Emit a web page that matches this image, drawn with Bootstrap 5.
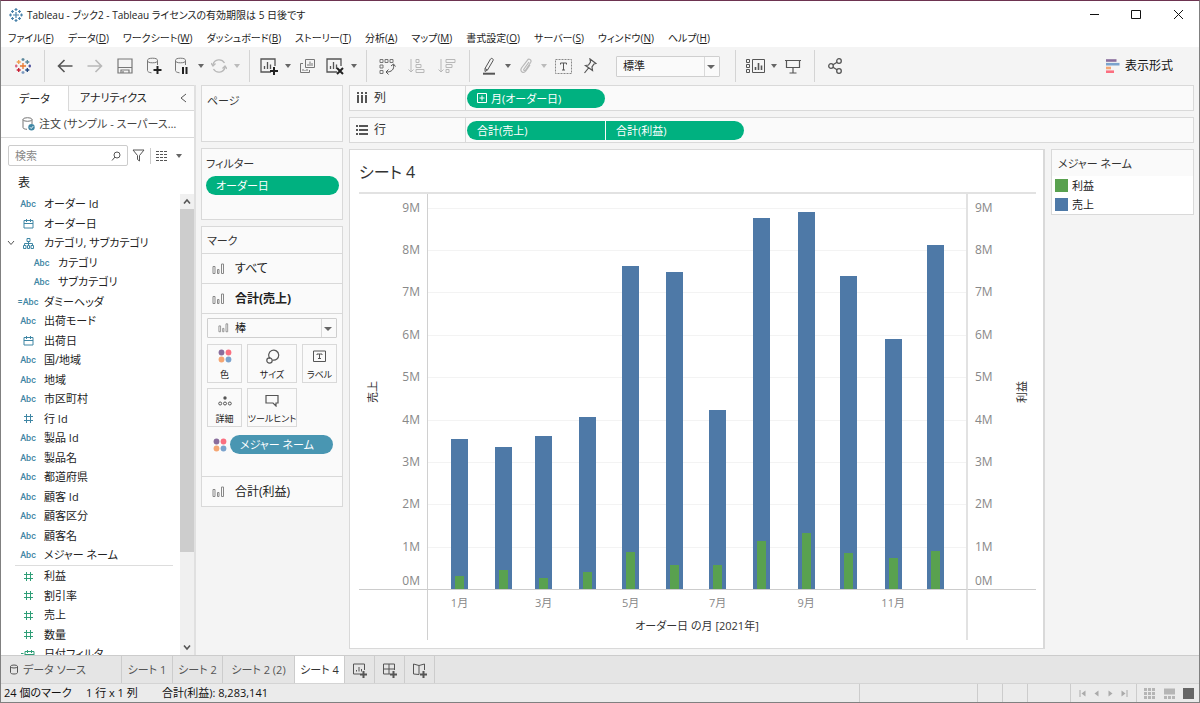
<!DOCTYPE html>
<html lang="ja">
<head>
<meta charset="utf-8">
<meta name="viewport" content="width=device-width, initial-scale=1">
<title>Tableau - ブック2</title>
<link rel="stylesheet" href="https://cdn.jsdelivr.net/npm/bootstrap@5.3.0/dist/css/bootstrap.min.css">
<style>
  :root { --line:#d9d9d9; --ink:#222; --dim:#333; --teal:#3f86a4; --grn:#2f9e77; --pill:#00b180; }
  body { font-family:"Open Sans","Noto Sans CJK JP",sans-serif; font-size:11px; line-height:16px; color:var(--ink);
    font-feature-settings:"palt"; background:#f4f4f4; }
  button, input, select { font:inherit; color:inherit; font-feature-settings:inherit; }
  button { border:0; background:none; padding:0; }
  svg { display:block; fill:none; stroke:#555; flex:none; }
  svg.pale { stroke:#b8b8b8; }
  svg.soft { stroke:#777; }
  svg.on-pill { stroke:#fff; }
  .app-window { height:100vh; border:1px solid #808080; border-top-color:#6d3350; overflow:hidden; }
  .title-bar { height:27px; background:#fff; padding-left:8px; font-size:10px; }
  .title-bar svg { stroke:#111; }
  .title-bar .app-mark { stroke:#4a83ab; }
  .title-bar button { width:42px; height:27px; }
  .menu-bar { height:19px; background:#fff; font-size:10px; }
  .menu-list { width:702px; margin-left:7px; }
  .menu-list a { color:var(--ink); text-decoration:none; line-height:20px; white-space:nowrap; }
  .tool-bar { height:38px; }
  .tool-bar button { display:flex; align-items:center; justify-content:center; height:30px; flex:none; }
  .b43 { width:43px } .b30 { width:30px } .b28 { width:28px } .b26 { width:26px }
  .tri { width:10px; }
  .tri::before, .drop::after { content:""; border:3px solid transparent; border-top:4px solid #666; border-bottom:0; }
  .tri.off::before { border-top-color:#bbb; }
  .vsep { width:1px; height:32px; background:#d4d4d4; margin:0 5px 0 7px; flex:none; }
  .vsep-short { width:1px; height:16px; background:#ccc; margin:0 5px; }
  .pick { position:relative; }
  .pick select { appearance:none; width:100%; height:21px; border:1px solid #cfcfcf; border-radius:1px; background:#fafafa; padding:0 6px; outline:0; line-height:16px; }
  .pick::after { content:""; position:absolute; right:0; top:1px; bottom:1px; width:16px; border-left:1px solid var(--line); pointer-events:none; }
  .pick::before { content:""; position:absolute; right:5px; top:9px; border:4px solid transparent; border-top:4px solid #666; border-bottom:0; z-index:1; pointer-events:none; }
  .pick svg { position:absolute; left:11px; top:5px; }
  .pick-tool { width:104px; margin:0 8px 0 13px; }
  .show-me { font-size:12px; gap:5px; margin-right:26px; color:#111; }
  .data-pane { width:195px; background:#fff; border-right:2px solid #e0e0e0; }
  .pane-tabs { height:26px; }
  .pane-tabs .on { width:67px; border-top:1px solid var(--line); }
  .pane-tabs .rest { background:#fafafa; border:1px solid var(--line); border-right:0; padding:0 6px 0 11px; }
  .source-row { height:27px; border-bottom:1px solid var(--line); padding-left:21px; color:#444; }
  .search-row { height:28px; padding:7px 8px 0 7px; }
  .search-box { width:120px; height:21px; border:1px solid #ccc; border-radius:2px; padding:0 6px; }
  .search-box input { border:0; outline:0; width:88px; padding:0; background:none; }
  .search-box input::placeholder { color:#888; opacity:1; }
  .list-head { height:28px; padding:9px 0 0 17px; font-size:12px; }
  .fields li { display:flex; align-items:center; height:20px; white-space:nowrap; }
  .fields li:nth-child(even) { height:19px; }
  .fields .kind { width:43px; padding-left:11px; display:flex; justify-content:center; align-items:center; color:var(--teal); font:500 9px/16px Roboto,sans-serif; }
  .fields .sub .kind { padding-left:0; margin-left:24px; width:33px; justify-content:center; }
  .fields svg { stroke:var(--teal); }
  .fields .twist { stroke:#555; }
  .measures { border-top:1px solid #ddd; width:158px; margin-left:14px; }
  .measures li { margin-left:-14px; }
  .fields.measures svg { stroke:var(--grn); }
  .scroller { width:14px; background:#f0f0f0; }
  .scroller i { background:#cdcdcd; flex:none; height:343px; }
  .shelf-col { width:142px; gap:6px; margin-left:5px; }
  .pane { background:#fafafa; border:1px solid var(--line); }
  .pane h2 { font-size:11px; line-height:16px; font-weight:400; color:var(--dim); margin:0; }
  .pages-card { height:57px; padding:7px 5px; }
  .filter-card { height:72px; padding:7px 3px 7px 4px; }
  .pill { background:var(--pill); color:#fff; border-radius:10px; height:19px; line-height:19px; padding-left:10px; white-space:nowrap; text-align:left; display:flex; align-items:center; }
  .pill-dim { background:#4996b2; }
  .marks-card h2 { padding:6px 5px 4px; }
  .mark-row { height:30px; border-top:1px solid var(--line); padding-left:10px; gap:10px; font-size:12px; display:flex; align-items:center; width:100%; }
  .mark-body { height:163px; border-top:1px solid var(--line); padding:4px 5px 0; }
  .mark-body .pick select { height:20px; padding-left:27px; }
  .mark-grid { display:grid; grid-template-columns:35px 50px 35px; justify-content:space-between; row-gap:5px; margin-top:6px; }
  .mark-grid button { height:39px; border:1px solid var(--line); display:flex; flex-direction:column; align-items:center; justify-content:space-between; padding-top:4px; font-size:9px; white-space:nowrap; }
  .mark-grid button span { line-height:14px; }
  .mark-pill { margin:8px 4px 0 6px; gap:3px; }
  .workspace { margin:0 5px 6px 6px; gap:6px; min-width:0; }
  .shelf { height:26px; font-size:12px; color:var(--dim); }
  .shelf .head { width:116px; border-right:1px solid var(--line); padding-left:6px; gap:6px; }
  .shelf .pill { width:138px; font-size:11px; margin-left:1px; }
  .canvas { gap:6px; min-height:0; }
  .sheet { background:#fff; border:1px solid var(--line); border-right-width:2px; padding:0 7px 8px 9px; min-width:0; }
  .sheet h1 { font-size:16px; line-height:44px; height:42px; margin:0; font-weight:400; color:#333; }
  .chart { display:grid; grid-template-columns:68px 1fr 68px; grid-template-rows:1fr 51px; border-top:2px solid #e2e2e2; color:#888; }
  .chart > * { min-width:0; min-height:0; }
  .scale { display:flex; flex-direction:column; justify-content:flex-end; height:100%; }
  .scale > * { height:calc(100% / 9.32); display:flex; flex-direction:column; justify-content:space-between; }
  .scale span { display:block; margin-top:-8px; line-height:16px; font-size:12px; }
  .scale span + span { margin:0; }
  .scale-left { text-align:right; padding-right:7px; }
  .scale-right { padding-left:7px; }
  .grid-lines > * { border-top:1px solid #f3f3f3; }
  .axis-name { writing-mode:vertical-rl; text-orientation:sideways; transform:rotate(180deg); color:#333; width:28px; line-height:28px; text-align:center; }
  .plot { display:grid; border-left:1px solid #d0d0d0; border-right:2px solid #e2e2e2; }
  .plot > * { grid-area:1 / 1; }
  .months { display:flex; padding-left:23px; min-width:0; }
  .months > * { flex:var(--d) 1 0; min-width:0; }
  .col-slot { display:flex; align-items:flex-end; }
  .bar-sales { width:17px; height:calc(var(--v) * 100% / 9.32); background:#4e79a7; flex:none; }
  .bar-profit { width:9px; height:calc(var(--v) * 100% / 9.32); background:#59a14f; margin-left:-13px; flex:none; }
  .foot { border-top:1px solid #ccc; }
  .foot-mid { border-left:1px solid #d0d0d0; border-right:2px solid #e2e2e2; }
  .tick { width:17px; display:flex; justify-content:center; white-space:nowrap; padding-top:5px; }
  .foot-title { color:#333; text-align:center; padding-top:7px; }
  .legend-box { width:143px; }
  .legend-box h2 { background:#fafafa; padding:6px 6px 4px; }
  .legend-box .entry { height:19px; gap:4px; padding-left:3px; }
  .swatch { width:13px; height:13px; }
  .c-profit { background:#59a14f; } .c-sales { background:#4e79a7; }
  .sheet-tabs { height:28px; background:#e5e5e5; border-top:1px solid #ccc; color:#555; }
  .sheet-tabs button { border-right:1px solid #ccc; display:flex; align-items:center; justify-content:center; }
  .sheet-tabs .source { width:121px; justify-content:flex-start; padding-left:8px; gap:4px; }
  .w50 { width:50px } .w51 { width:51px } .w72 { width:72px }
  .sheet-tabs .on { background:#fff; color:#333; }
  .status-bar { height:19px; background:#ebebeb; border-top:1px solid #d4d4d4; color:#111; padding-left:3px; }
  .status-bar .cell { border-left:1px solid #ccc; }
  .w118 { width:118px } .w25 { width:25px } .w43 { width:43px } .w66 { width:66px; padding:0 4px } .w62 { width:63px; padding:0 5px 0 7px }
  .w82 { width:82px } .w76 { width:76px }
</style>
</head>
<body>
<svg width="0" height="0" class="position-absolute">
  <defs>
    <symbol id="hash" viewBox="0 0 11 11"><path d="M3.5 1v9M7.5 1v9M1 3.5h9M1 7.5h9"/></symbol>
    <symbol id="cal" viewBox="0 0 11 11"><path d="M1 2.5h9v7.5H1zM1 5.5h9M3.5 1v3M7.5 1v3"/></symbol>
    <symbol id="tree" viewBox="0 0 11 11"><path d="M4 .5h3v3H4zM.5 7.500h2.500v3H.5zM4.500 7.500h2v3h-2zM8 7.500h2.500v3H8zM5.500 3.500v4M1.500 7.500v-2h8v2"/></symbol>
    <symbol id="bars" viewBox="0 0 13 12"><path d="M1 3.500h2v7H1zM5.500 6.500h1.500v4H5.500zM9.500 1h2v9.500h-2z" stroke="#888"/></symbol>
    <symbol id="dots" viewBox="0 0 14 14"><g stroke="none"><circle cx="3.500" cy="3.500" r="2.900" fill="#8a6d9c"/><circle cx="10.500" cy="3.500" r="2.900" fill="#fb6f80"/><circle cx="3.500" cy="10.500" r="2.900" fill="#f5a673"/><circle cx="10.500" cy="10.500" r="2.900" fill="#7ba3cd"/></g></symbol>
    <symbol id="chart" viewBox="0 0 20 20"><path d="M12 16H2V3h14v7M5.500 13v-3M8.500 13V6M11.500 13V8.500" stroke-width="1.300"/></symbol>
  </defs>
</svg>

<div class="app-window d-flex flex-column">
  <header>
    <div class="title-bar d-flex align-items-center">
      <svg class="app-mark" width="14" height="14" viewBox="0 0 14 14" stroke-width="1.200"><path d="M7 4v6M4 7h6M7 0v3M5.500 1.500h3M7 11v3M5.500 12.500h3M1.500 5.500v3M0 7h3M12.500 5.500v3M11 7h3M3.500 2v3M2 3.500h3M10.500 2v3M9 3.500h3M3.500 9v3M2 10.500h3M10.500 9v3M9 10.500h3"/></svg>
      <span class="ms-1">Tableau - ブック2 - Tableau ライセンスの有効期限は 5 日後です</span>
      <div class="ms-auto d-flex">
        <button aria-label="最小化"><svg class="mx-auto" width="11" height="11"><path d="M1 5.500h9"/></svg></button>
        <button aria-label="最大化"><svg class="mx-auto" width="11" height="11"><path d="M.5 1.500h9v8h-9z"/></svg></button>
        <button aria-label="閉じる"><svg class="mx-auto" width="11" height="11"><path d="M1 1l9 9M10 1l-9 9"/></svg></button>
      </div>
    </div>
    <nav class="menu-bar"><div class="menu-list d-flex justify-content-between">
      <a href="#">ファイル(<u>F</u>)</a><a href="#">データ(<u>D</u>)</a><a href="#">ワークシート(<u>W</u>)</a><a href="#">ダッシュボード(<u>B</u>)</a><a href="#">ストーリー(<u>T</u>)</a><a href="#">分析(<u>A</u>)</a><a href="#">マップ(<u>M</u>)</a><a href="#">書式設定(<u>O</u>)</a><a href="#">サーバー(<u>S</u>)</a><a href="#">ウィンドウ(<u>N</u>)</a><a href="#">ヘルプ(<u>H</u>)</a>
    </div></nav>
    <div class="tool-bar d-flex align-items-center">
      <button class="b43" aria-label="スタート ページ"><svg width="16" height="16" viewBox="0 0 16 16" stroke-width="1.300"><path d="M8 5v6M5 8h6" stroke="#e8762c"/><path d="M8 0v3M6.500 1.500h3" stroke="#5b879b"/><path d="M8 13v3M6.500 14.500h3" stroke="#7a99c0"/><path d="M3.700 2v4M1.700 4h4" stroke="#f0a050"/><path d="M12.300 2v4M10.300 4h4" stroke="#59879b"/><path d="M3.700 10v4M1.700 12h4" stroke="#c72035"/><path d="M12.300 10v4M10.300 12h4" stroke="#1f457e"/><path d="M1.200 6.500v3M0 8h2.500" stroke="#d9607b"/><path d="M14.800 6.500v3M13.500 8H16" stroke="#4c4f9c"/></svg></button>
      <span class="vsep ms-0"></span>
      <button class="b30" aria-label="元に戻す"><svg width="16" height="14" viewBox="0 0 16 14" stroke-width="1.600"><path d="M15.500 7H1.500M7.500 1l-6 6 6 6"/></svg></button>
      <button class="b30" aria-label="やり直し"><svg class="pale" width="16" height="14" viewBox="0 0 16 14" stroke-width="1.600"><path d="M.5 7h14M8.500 1l6 6-6 6"/></svg></button>
      <button class="b30" aria-label="保存"><svg class="soft" width="16" height="16" viewBox="0 0 16 16" stroke-width="1.200"><path d="M1 1h14v14H1zM1.500 9.500h13M4 15v-3h8v3M6 13v2"/></svg></button>
      <button class="b28" aria-label="データ ソースの追加"><svg class="soft" width="18" height="18" viewBox="0 0 18 18"><ellipse cx="7.500" cy="3.500" rx="5" ry="2.300"/><path d="M2.500 3.500v10c0 1.200 1.500 2 4 2.300M12.500 3.500V8" /><path d="M12.500 9v8M8.500 13h8" stroke="#222" stroke-width="2"/></svg></button>
      <button class="b28" aria-label="自動更新の一時停止"><svg class="soft" width="18" height="18" viewBox="0 0 18 18"><ellipse cx="7.500" cy="3.500" rx="5" ry="2.300"/><path d="M2.500 3.500v10c0 1.200 1.500 2 4 2.300M12.500 3.500V8"/><path d="M10 10v7M13.500 10v7" stroke="#222" stroke-width="2"/></svg></button>
      <button class="tri" aria-label="更新メニュー"></button>
      <button class="b26" aria-label="更新"><svg class="pale" width="16" height="16" viewBox="0 0 16 16" stroke-width="1.300"><path d="M2 6.500A6.300 6.300 0 0 1 13.500 5M14 9.500A6.300 6.300 0 0 1 2.500 11M0 5l2 3 2.500-2.500M16 11l-2-3-2.500 2.500"/></svg></button>
      <button class="tri off" aria-label="更新オプション"></button>
      <span class="vsep"></span>
      <button class="b28" aria-label="新しいワークシート"><svg width="20" height="20" viewBox="0 0 20 20"><use href="#chart"/><path d="M15 11v8M11 15h8" stroke="#222" stroke-width="2"/></svg></button>
      <button class="tri" aria-label="新規メニュー"></button>
      <button class="b28" aria-label="複製"><svg class="soft" width="17" height="16" viewBox="0 0 17 16"><path d="M6.500 1.500h9v8h-9zM4 5.500H1.500v9h9v-2.500M9 8V6M11 8V3.500M13 8V5M4 13v-2M6 13v-1M8 13v-2"/></svg></button>
      <button class="b28" aria-label="シートのクリア"><svg width="20" height="20" viewBox="0 0 20 20"><use href="#chart"/><path d="M12 12l6 6M18 12l-6 6" stroke="#222" stroke-width="2"/></svg></button>
      <button class="tri" aria-label="クリア メニュー"></button>
      <span class="vsep"></span>
      <button class="b30" aria-label="行と列の交換"><svg width="17" height="17" viewBox="0 0 17 17"><path d="M1 1.500h3v3H1zM6 1.500h3v3H6zM11 1.500h3v3h-3zM1 7h3v3H1zM1 12.500h3v3H1z" stroke="#777"/><path d="M14.500 6.500c1 5-2 7.500-7 7.500M12 8l2.500-2 2 2.500M9.500 11.500L7 14l2.500 2.500"/></svg></button>
      <button class="b30" aria-label="昇順"><svg class="pale" width="18" height="16" viewBox="0 0 18 16"><path d="M3 1v13M.5 11.500L3 14l2.500-2.500M8 1.500h3v3H8zM8 6.500h5v3H8zM8 11.500h8v3H8z"/></svg></button>
      <button class="b30" aria-label="降順"><svg class="pale" width="18" height="16" viewBox="0 0 18 16"><path d="M3 1v13M.5 11.500L3 14l2.500-2.500M8 1.500h9v3H8zM8 6.500h6v3H8zM8 11.500h3v3H8z"/></svg></button>
      <span class="vsep"></span>
      <button class="b28" aria-label="ハイライト"><svg width="14" height="18" viewBox="0 0 14 18"><path d="M3 11.500L8.500 2c1-1.500 3.500 0 2.500 1.700L5.500 13 3 14.500zM3 11.500L5.500 13"/><path d="M1 16.700h12" stroke-width="2"/></svg></button>
      <button class="tri" aria-label="ハイライト メニュー"></button>
      <button class="b26" aria-label="グループ"><svg class="pale" width="14" height="16" viewBox="0 0 14 16" stroke-width="1.200"><path d="M10 4l-5 7c-.8 1.200.7 2.300 1.600 1l5-7.500c1.500-2.500-1.700-4.500-3.300-2.200L2.500 10c-2 3.500 2 6 4.300 3L11 7"/></svg></button>
      <button class="tri off" aria-label="グループ メニュー"></button>
      <button class="b28" aria-label="マーク ラベル"><svg width="17" height="15" viewBox="0 0 17 15"><path d="M.5.500h16v14H.5z" stroke-dasharray="2 1" stroke="#888"/><path d="M5.500 5.500V4h6v1.500M8.500 4v7M7 11h3"/></svg></button>
      <button class="b26" aria-label="軸の固定"><svg width="14" height="16" viewBox="0 0 14 16" stroke-width="1.200"><path d="M7 1l6 4.500-2 .5-2 3 .5 3.500L2.500 7.500 5.500 7l2-3zM5.500 10L1.500 15"/></svg></button>
      <div class="pick pick-tool"><select aria-label="表示サイズ"><option>標準</option></select></div>
      <span class="vsep"></span>
      <button class="b28" aria-label="カードの表示"><svg width="19" height="14" viewBox="0 0 19 14"><path d="M.5.500h3v3h-3zM.5 5.500h3v3h-3zM.5 10.500h3v3h-3zM6.500.500h12v13h-12z"/><path d="M9.500 11V8M12.500 11V4M15.500 11V6.500" stroke-width="1.600"/></svg></button>
      <button class="tri" aria-label="カード メニュー"></button>
      <button class="b28" aria-label="プレゼンテーション"><svg width="16" height="15" viewBox="0 0 16 15" stroke-width="1.200"><path d="M0 1.500h16M1.500 1.500v7h13v-7M8 8.500v5M4.500 14h7"/></svg></button>
      <span class="vsep"></span>
      <button class="b30" aria-label="共有"><svg width="15" height="16" viewBox="0 0 15 16" stroke-width="1.300"><circle cx="3" cy="8" r="2.300"/><circle cx="11" cy="3" r="2.300"/><circle cx="11" cy="13" r="2.300"/><path d="M5 6.800l4-2.500M5 9.200l4 2.500"/></svg></button>
      <button class="show-me ms-auto"><svg width="14" height="14" viewBox="0 0 14 14" stroke-width="2.600"><path d="M0 1.500h10.500" stroke="#8a6d9c"/><path d="M0 5.200h13.500" stroke="#7ba3cd"/><path d="M0 9h5" stroke="#f5a673"/><path d="M0 12.700h8" stroke="#fb6f80"/></svg>表示形式</button>
    </div>
  </header>

  <main class="d-flex flex-fill overflow-hidden">
    <aside class="data-pane d-flex flex-column flex-shrink-0">
      <div class="pane-tabs d-flex flex-shrink-0">
        <button class="on">データ</button>
        <div class="rest flex-fill d-flex align-items-center justify-content-between">
          <button>アナリティクス</button>
          <button aria-label="折りたたむ"><svg width="9" height="10"><path d="M7 1L2 5l5 4"/></svg></button>
        </div>
      </div>
      <div class="source-row d-flex align-items-center flex-shrink-0">
        <svg class="soft" width="13" height="14" viewBox="0 0 13 14"><path d="M1 2.500v8c0 1 1.500 1.700 4 1.800M10 2.500V7"/><ellipse cx="5.500" cy="2.500" rx="4.500" ry="1.800"/><circle cx="9.500" cy="10.300" r="3.200" fill="#3f86a4" stroke="none"/><path d="M8 10.300l1.200 1.200 2-2.300" stroke="#fff"/></svg>
        <a href="#" class="ms-1 text-reset text-decoration-none text-nowrap">注文 (サンプル - スーパース…</a>
      </div>
      <div class="search-row d-flex align-items-center flex-shrink-0">
        <label class="search-box d-flex align-items-center justify-content-between"><input type="text" placeholder="検索" aria-label="検索"><svg width="10" height="10" viewBox="0 0 10 10"><circle cx="6" cy="4" r="3"/><path d="M4 6L1 9.500"/></svg></label>
        <button class="ms-1" aria-label="フィルター"><svg width="13" height="13"><path d="M1 1h11L7.500 6.500V12l-2-1.500v-4z"/></svg></button>
        <span class="vsep-short"></span>
        <button class="drop d-flex align-items-center gap-2" aria-label="表示の切り替え"><svg width="12" height="10"><path d="M0 .5h12M0 3.500h12M0 6.500h12M0 9.500h12" stroke-dasharray="3 1"/></svg></button>
      </div>
      <div class="list-head flex-shrink-0">表</div>
      <div class="d-flex flex-fill overflow-hidden">
        <div class="flex-fill overflow-hidden">
          <ul class="fields list-unstyled m-0">
            <li><span class="kind">Abc</span>オーダー Id</li>
            <li><span class="kind"><svg width="11" height="11"><use href="#cal"/></svg></span>オーダー日</li>
            <li><span class="kind"><svg class="twist me-2" width="8" height="6" viewBox="0 0 8 6"><path d="M1 1l3 3.500L7 1"/></svg><svg width="11" height="11" class="me-3"><use href="#tree"/></svg></span>カテゴリ, サブカテゴリ</li>
            <li class="sub"><span class="kind">Abc</span>カテゴリ</li>
            <li class="sub"><span class="kind">Abc</span>サブカテゴリ</li>
            <li><span class="kind">=Abc</span>ダミーヘッダ</li>
            <li><span class="kind">Abc</span>出荷モード</li>
            <li><span class="kind"><svg width="11" height="11"><use href="#cal"/></svg></span>出荷日</li>
            <li><span class="kind">Abc</span>国/地域</li>
            <li><span class="kind">Abc</span>地域</li>
            <li><span class="kind">Abc</span>市区町村</li>
            <li><span class="kind"><svg width="11" height="11"><use href="#hash"/></svg></span>行 Id</li>
            <li><span class="kind">Abc</span>製品 Id</li>
            <li><span class="kind">Abc</span>製品名</li>
            <li><span class="kind">Abc</span>都道府県</li>
            <li><span class="kind">Abc</span>顧客 Id</li>
            <li><span class="kind">Abc</span>顧客区分</li>
            <li><span class="kind">Abc</span>顧客名</li>
            <li><span class="kind">Abc</span>メジャー ネーム</li>
          </ul>
          <ul class="fields measures list-unstyled mb-0">
            <li><span class="kind"><svg width="11" height="11"><use href="#hash"/></svg></span>利益</li>
            <li><span class="kind"><svg width="11" height="11"><use href="#hash"/></svg></span>割引率</li>
            <li><span class="kind"><svg width="11" height="11"><use href="#hash"/></svg></span>売上</li>
            <li><span class="kind"><svg width="11" height="11"><use href="#hash"/></svg></span>数量</li>
            <li><span class="kind"><svg width="14" height="11" viewBox="0 0 14 11"><path d="M0 4.500h2.500M0 7h2.500M4 2.500h9v7.500H4zM4 5.500h9M6.500 1v3M10.500 1v3"/></svg></span>日付フィルタ</li>
          </ul>
        </div>
        <div class="scroller d-flex flex-column flex-shrink-0">
          <svg width="14" height="15"><path d="M4 9.500L7 6l3 3.500" stroke-width="1.600"/></svg><i></i>
          <svg class="mt-auto" width="14" height="15"><path d="M4 5.500L7 9l3-3.500" stroke-width="1.600"/></svg>
        </div>
      </div>
    </aside>

    <section class="shelf-col d-flex flex-column flex-shrink-0">
      <div class="pane pages-card"><h2>ページ</h2></div>
      <div class="pane filter-card"><h2>フィルター</h2><button class="pill w-100 mt-1">オーダー日</button></div>
      <div class="pane marks-card">
        <h2>マーク</h2>
        <button class="mark-row"><svg width="13" height="12"><use href="#bars"/></svg>すべて</button>
        <button class="mark-row fw-bold"><svg width="13" height="12"><use href="#bars"/></svg>合計(売上)</button>
        <div class="mark-body">
          <div class="pick"><select aria-label="マーク タイプ"><option>棒</option></select><svg width="11" height="10"><use href="#bars"/></svg></div>
          <div class="mark-grid">
            <button><svg width="14" height="14"><use href="#dots"/></svg><span>色</span></button>
            <button><svg width="15" height="15" viewBox="0 0 15 15" stroke-width="1.200"><path d="M5 9.500A5 5 0 1 1 7.500 11"/><circle cx="4.500" cy="11.500" r="2.700"/></svg><span>サイズ</span></button>
            <button><svg width="13" height="14" viewBox="0 0 13 14"><path d="M.5 2h12v10.500H.5zM4 6V5h5v1M6.500 5v4.500M5 9.500h3"/></svg><span>ラベル</span></button>
            <button><svg width="14" height="14" viewBox="0 0 14 14"><circle cx="7" cy="5" r="1.700" fill="#555" stroke="none"/><circle cx="2.200" cy="10.500" r="1.500"/><circle cx="7" cy="10.500" r="1.500"/><circle cx="11.800" cy="10.500" r="1.500"/></svg><span>詳細</span></button>
            <button><svg width="14" height="14" viewBox="0 0 14 14" stroke-width="1.200"><path d="M1 2.500h12v7.500h-2v3l-3-3H1z"/></svg><span>ツールヒント</span></button>
          </div>
          <div class="mark-pill d-flex align-items-center"><svg width="14" height="14"><use href="#dots"/></svg><button class="pill pill-dim flex-fill">メジャー ネーム</button></div>
        </div>
        <button class="mark-row"><svg width="13" height="12"><use href="#bars"/></svg>合計(利益)</button>
      </div>
    </section>

    <section class="workspace flex-fill d-flex flex-column">
      <div class="pane shelf d-flex align-items-center flex-shrink-0">
        <div class="head d-flex align-items-center h-100"><svg width="12" height="12" stroke-width="2"><path d="M2 0v2M2 3v8M6 0v2M6 3v8M10 0v2M10 3v8"/></svg>列</div>
        <button class="pill"><svg class="me-1 on-pill" width="10" height="10"><path d="M.5.5h9v9h-9zM5 2.500v5M2.500 5h5"/></svg>月(オーダー日)</button>
      </div>
      <div class="pane shelf d-flex align-items-center flex-shrink-0">
        <div class="head d-flex align-items-center h-100"><svg width="12" height="12" stroke-width="2"><path d="M0 2h2M3 2h9M0 6h2M3 6h9M0 10h2M3 10h9"/></svg>行</div>
        <button class="pill rounded-end-0">合計(売上)</button><button class="pill rounded-start-0">合計(利益)</button>
      </div>
      <div class="canvas d-flex flex-fill">
        <article class="sheet flex-fill d-flex flex-column">
          <h1>シート 4</h1>
          <div class="chart flex-fill">
            <div class="d-flex align-items-center"><span class="axis-name">売上</span>
              <div class="scale scale-left flex-fill"><div><span>9M</span></div><div><span>8M</span></div><div><span>7M</span></div><div><span>6M</span></div><div><span>5M</span></div><div><span>4M</span></div><div><span>3M</span></div><div><span>2M</span></div><div><span>1M</span><span>0M</span></div></div></div>
            <div class="plot">
              <div class="scale grid-lines"><i></i><i></i><i></i><i></i><i></i><i></i><i></i><i></i><i></i></div>
              <div class="months" id="bars-row"></div>
            </div>
            <div class="d-flex align-items-center">
              <div class="scale scale-right flex-fill"><div><span>9M</span></div><div><span>8M</span></div><div><span>7M</span></div><div><span>6M</span></div><div><span>5M</span></div><div><span>4M</span></div><div><span>3M</span></div><div><span>2M</span></div><div><span>1M</span><span>0M</span></div></div><span class="axis-name">利益</span></div>
            <div class="foot"></div>
            <div class="foot foot-mid"><div class="months" id="ticks-row"></div><div class="foot-title">オーダー日 の月 [2021年]</div></div>
            <div class="foot"></div>
          </div>
        </article>
        <aside class="legend-box flex-shrink-0"><div class="pane bg-white">
          <h2>メジャー ネーム</h2>
          <div class="entry d-flex align-items-center"><span class="swatch c-profit"></span>利益</div>
          <div class="entry d-flex align-items-center"><span class="swatch c-sales"></span>売上</div>
        </div></aside>
      </div>
    </section>
  </main>

  <footer class="flex-shrink-0">
    <div class="sheet-tabs d-flex">
      <button class="source"><svg width="10" height="11" viewBox="0 0 10 11"><ellipse cx="5" cy="2.500" rx="3.500" ry="1.500"/><path d="M1.500 2.500v6c0 2 7 2 7 0v-6"/></svg>データ ソース</button>
      <button class="w51">シート 1</button><button class="w50">シート 2</button><button class="w72">シート 2 (2)</button><button class="on w50">シート 4</button>
      <button class="b30" aria-label="新しいワークシート"><svg width="16" height="16" viewBox="0 0 16 16"><path d="M8 12H1.500V2h11v6M4.500 9.500V8M7 9.500V5M9.500 9.500V7"/><path d="M11.500 9v7M8 12.500h7" stroke-width="2"/></svg></button>
      <button class="b30" aria-label="新しいダッシュボード"><svg width="16" height="16" viewBox="0 0 16 16"><path d="M8 12H1.500V2h11v6M1.500 7h11M7 2v10"/><path d="M11.500 9v7M8 12.500h7" stroke-width="2"/></svg></button>
      <button class="b30" aria-label="新しいストーリー"><svg width="16" height="16" viewBox="0 0 16 16"><path d="M7 12.500L1.500 12V2L7 3.500v9M7 3.500L12.500 2v6"/><path d="M11.500 9v7M8 12.500h7" stroke-width="2"/></svg></button>
    </div>
    <div class="status-bar d-flex align-items-center">
      <span class="w82">24 個のマーク</span><span class="w76">1 行 x 1 列</span><span>合計(利益): 8,283,141</span>
      <div class="ms-auto d-flex align-self-stretch">
        <span class="cell w118"></span><span class="cell w25"></span><span class="cell w25"></span><span class="cell w43"></span>
        <span class="cell w66 d-flex align-items-center justify-content-around">
          <button aria-label="最初"><svg width="7" height="7"><path d="M1 0v7" stroke="#aaa"/><path d="M6.500.5v6L2.500 3.500z" fill="#aaa" stroke="none"/></svg></button>
          <button aria-label="前へ"><svg width="7" height="7"><path d="M5.500.5v6L1.500 3.500z" fill="#aaa" stroke="none"/></svg></button>
          <button aria-label="次へ"><svg width="7" height="7"><path d="M1.500.5v6l4-3z" fill="#aaa" stroke="none"/></svg></button>
          <button aria-label="最後"><svg width="7" height="7"><path d="M6 0v7" stroke="#aaa"/><path d="M.5.500v6l4-3z" fill="#aaa" stroke="none"/></svg></button>
        </span>
        <span class="cell w62 d-flex align-items-center justify-content-between">
          <button aria-label="シート ソーター"><svg width="11" height="11" stroke-width="3"><path d="M0 1.500h11M0 5.500h11M0 9.500h11" stroke="#b5b5b5" stroke-dasharray="3 1"/></svg></button>
          <button aria-label="フィルムストリップ"><svg width="11" height="11"><path d="M0 3.500h11" stroke="#b5b5b5" stroke-width="6"/><path d="M0 9.500h11" stroke="#b5b5b5" stroke-width="3" stroke-dasharray="3 1"/></svg></button>
          <button aria-label="タブ表示"><svg width="11" height="11"><path d="M0 0h11v11H0z" fill="#666" stroke="none"/></svg></button>
        </span>
      </div>
    </div>
  </footer>
</div>
<script src="https://cdn.jsdelivr.net/npm/bootstrap@5.3.0/dist/js/bootstrap.bundle.min.js"></script>
<script>
  // 月ごとの [日数, 売上(百万), 利益(百万)]
  const rows = [[31,3.55,.31],[28,3.35,.44],[31,3.62,.27],[30,4.06,.40],[31,7.61,.88],[30,7.48,.56],
                [31,4.23,.56],[31,8.76,1.14],[30,8.9,1.32],[31,7.39,.86],[30,5.91,.73],[27,8.11,.9]];
  document.getElementById('bars-row').innerHTML = rows.map(r =>
    `<div class="col-slot" style="--d:${r[0]}"><div class="bar-sales" style="--v:${r[1]}"></div><div class="bar-profit" style="--v:${r[2]}"></div></div>`).join('');
  document.getElementById('ticks-row').innerHTML = rows.map((r, i) =>
    `<div style="--d:${r[0]}"><div class="tick">${i % 2 ? '&nbsp;' : (i + 1) + '月'}</div></div>`).join('');
</script>
</body>
</html>
